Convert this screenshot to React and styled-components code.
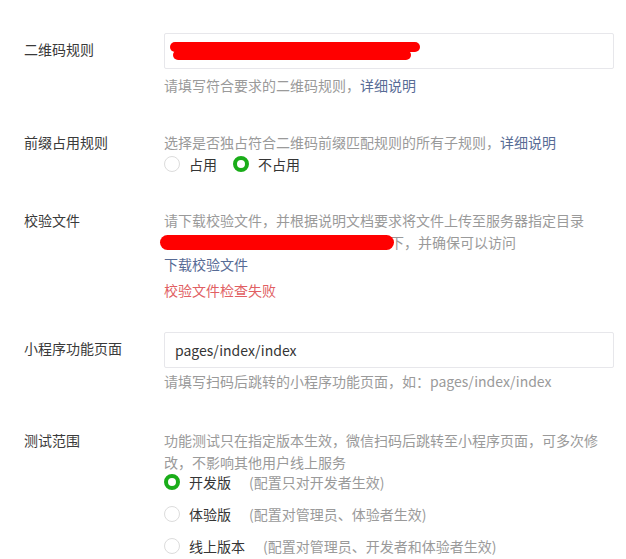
import React from "react";
import styled, { createGlobalStyle } from "styled-components";

const Global = createGlobalStyle`
  html, body { margin: 0; padding: 0; background: #fff; }
  body {
    font-family: "Noto Sans CJK SC", "Noto Sans", sans-serif;
    font-size: 14px;
    color: #353535;
  }
`;

const Form = styled.div`
  padding: 33px 0 0 24px;
  width: 602px;
`;

const Row = styled.div`
  display: grid;
  grid-template-columns: 140px 450px;
  margin-top: ${(p) => p.$mt || 0}px;
`;

const Label = styled.div`
  color: #3a3a3a;
  line-height: ${(p) => (p.$input ? 36 : 22)}px;
  margin-top: ${(p) => (p.$input ? -2 : 0)}px;
`;

const Field = styled.div`
  display: flex;
  flex-direction: column;
  min-width: 0;
`;

const InputWrap = styled.div`
  position: relative;
  height: 36px;
  box-sizing: border-box;
  border: 1px solid #e7e7eb;
  border-radius: 2px;
  background: #fff;
`;

const TextInput = styled.input`
  width: 100%;
  height: 100%;
  box-sizing: border-box;
  border: none;
  outline: none;
  background: transparent;
  padding: 0 10px;
  font-family: "Noto Sans CJK SC", "Noto Sans", sans-serif;
  font-size: 14px;
  color: #353535;
`;

const Scribble = styled.svg`
  position: absolute;
  display: block;
  left: ${(p) => p.$left}px;
  top: ${(p) => p.$top}px;
  overflow: visible;
  pointer-events: none;
`;

const Hint = styled.div`
  color: #9a9a9a;
  line-height: 22px;
  margin-top: ${(p) => p.$mt || 0}px;
  width: 440px;
`;

const Link = styled.a`
  color: #576b95;
  text-decoration: none;
`;

const BlockLink = styled(Link)`
  display: block;
  line-height: 22px;
`;

const Error = styled.div`
  color: #e15f63;
  line-height: 22px;
  margin-top: 4px;
`;

const RedactLine = styled.span`
  position: relative;
  display: inline-block;
  width: 230px;
  height: 22px;
  margin-left: -4px;
  vertical-align: top;
`;

const RadioGroup = styled.div`
  display: flex;
  flex-direction: ${(p) => (p.$column ? "column" : "row")};
  gap: ${(p) => (p.$column ? 10 : 16)}px;
  margin-top: ${(p) => (p.$column ? -2 : 0)}px;
`;

const RadioItem = styled.label`
  display: flex;
  align-items: center;
  height: 22px;
  color: #353535;
  cursor: pointer;
`;

const RadioDot = styled.span`
  width: 16px;
  height: 16px;
  box-sizing: border-box;
  border-radius: 50%;
  border: ${(p) => (p.$checked ? "4px solid #1aad19" : "1px solid #dcdcdc")};
  background: #fff;
  margin-right: 9px;
  flex: none;
`;

const RadioNote = styled.span`
  color: #9a9a9a;
  margin-left: 18px;
`;

function Radio({ checked, children, note }) {
  return (
    <RadioItem>
      <RadioDot $checked={checked} />
      {children}
      {note && <RadioNote>{note}</RadioNote>}
    </RadioItem>
  );
}

export default function App() {
  return (
    <>
      <Global />
      <Form>
        <Row>
          <Label $input>二维码规则</Label>
          <Field>
            <InputWrap>
              <TextInput defaultValue="" />
              <Scribble $left={5} $top={8} width="250" height="19" viewBox="0 0 250 19">
                <rect x="0" y="0" width="250" height="10" rx="5" fill="#ff0000" />
                <rect x="3" y="8" width="238" height="10" rx="5" fill="#ff0000" />
              </Scribble>
            </InputWrap>
            <Hint $mt={5}>
              请填写符合要求的二维码规则，<Link href="#">详细说明</Link>
            </Hint>
          </Field>
        </Row>

        <Row $mt={35}>
          <Label>前缀占用规则</Label>
          <Field>
            <Hint>
              选择是否独占符合二维码前缀匹配规则的所有子规则，<Link href="#">详细说明</Link>
            </Hint>
            <RadioGroup>
              <Radio>占用</Radio>
              <Radio checked>不占用</Radio>
            </RadioGroup>
          </Field>
        </Row>

        <Row $mt={34}>
          <Label>校验文件</Label>
          <Field>
            <Hint>
              请下载校验文件，并根据说明文档要求将文件上传至服务器指定目录
              <br />
              <RedactLine>
                <Scribble $left={0} $top={4} width="234" height="15" viewBox="0 0 234 15">
                  <rect x="0" y="0" width="234" height="15" rx="7.5" fill="#ff0000" />
                </Scribble>
              </RedactLine>
              下，并确保可以访问
            </Hint>
            <BlockLink href="#">下载校验文件</BlockLink>
            <Error>校验文件检查失败</Error>
          </Field>
        </Row>

        <Row $mt={31}>
          <Label $input>小程序功能页面</Label>
          <Field>
            <InputWrap>
              <TextInput defaultValue="pages/index/index" />
            </InputWrap>
            <Hint $mt={2}>请填写扫码后跳转的小程序功能页面，如：pages/index/index</Hint>
          </Field>
        </Row>

        <Row $mt={37}>
          <Label>测试范围</Label>
          <Field>
            <Hint>
              功能测试只在指定版本生效，微信扫码后跳转至小程序页面，可多次修改，不影响其他用户线上服务
            </Hint>
            <RadioGroup $column>
              <Radio checked note="(配置只对开发者生效)">开发版</Radio>
              <Radio note="(配置对管理员、体验者生效)">体验版</Radio>
              <Radio note="(配置对管理员、开发者和体验者生效)">线上版本</Radio>
            </RadioGroup>
          </Field>
        </Row>
      </Form>
    </>
  );
}
